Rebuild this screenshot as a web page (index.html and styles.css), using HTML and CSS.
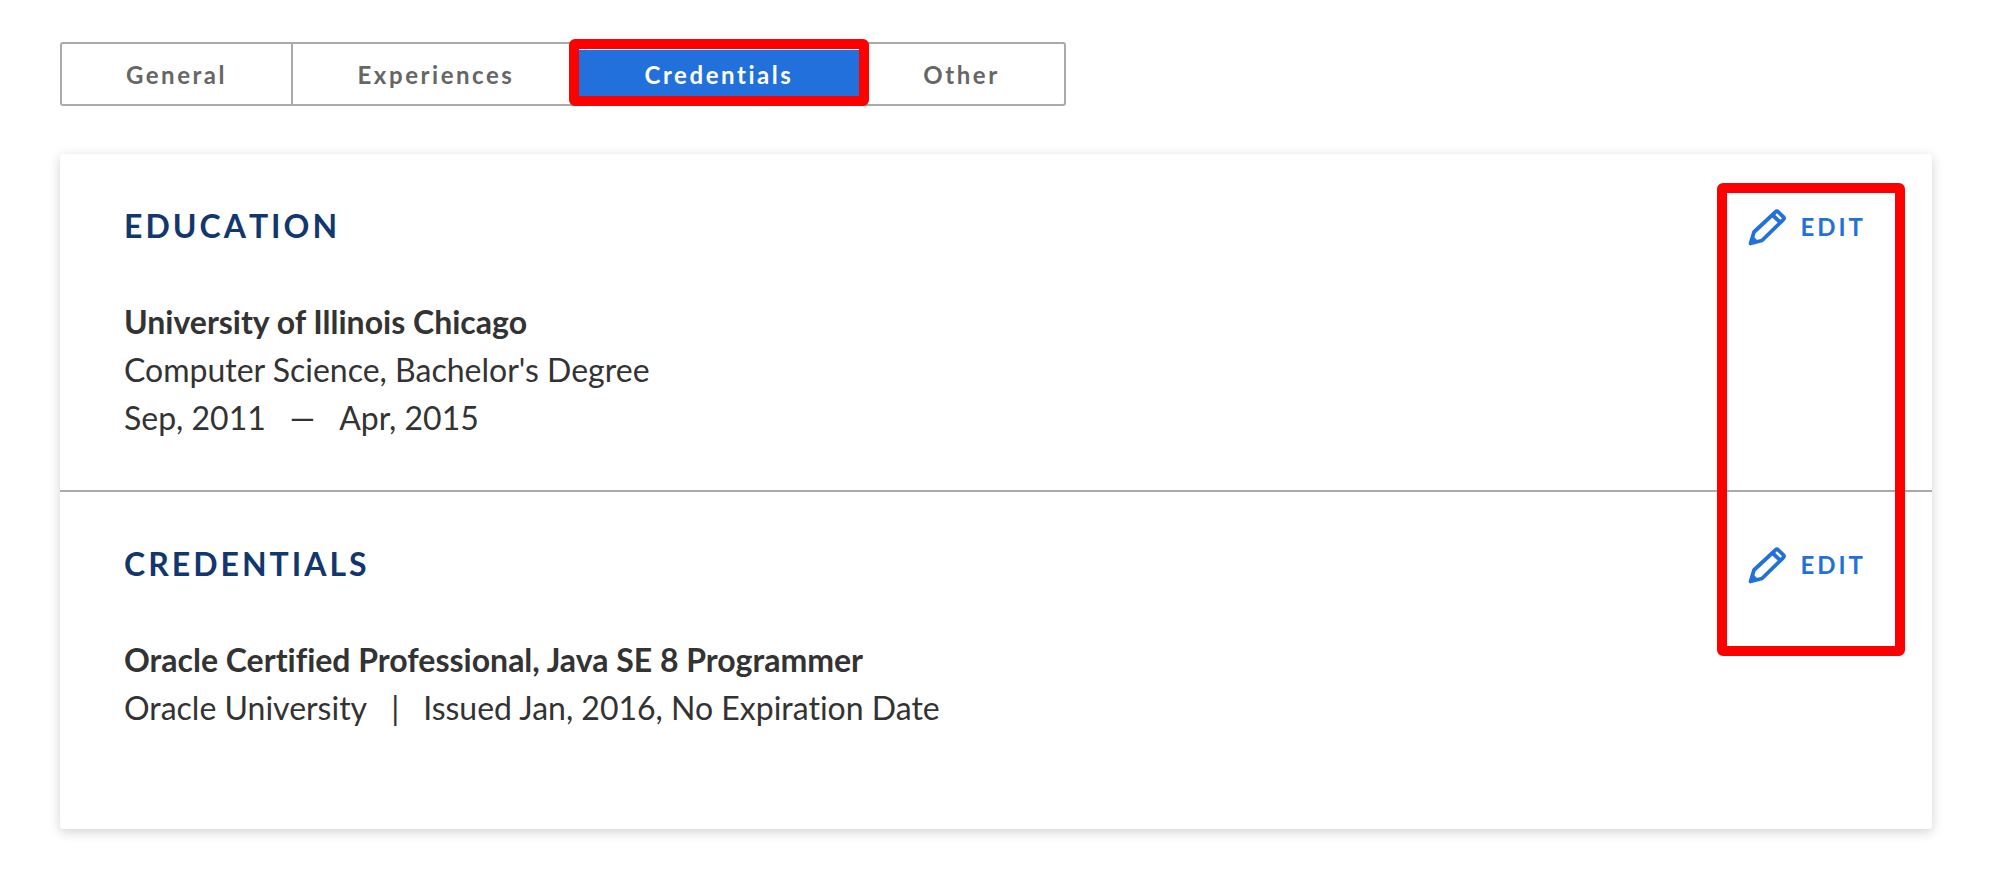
FILE: index.html
```html
<!DOCTYPE html>
<html lang="en">
<head>
<meta charset="utf-8">
<title>Credentials</title>
<link rel="stylesheet" href="styles.css">
</head>
<body>
<div class="page">
  <nav class="tabs">
    <div class="tab tab-general">General</div>
    <div class="tab tab-exp">Experiences</div>
    <div class="tab tab-cred active">Credentials</div>
    <div class="tab tab-other">Other</div>
  </nav>
  <main class="card">
    <section class="section section-edu">
      <div class="head">
        <h2>EDUCATION</h2>
        <a class="edit"><svg class="pencil" viewBox="0 0 38 37" fill="none" stroke="#2270db" stroke-width="3.8" stroke-linejoin="round"><path d="M6 23 27.500 3a2 2 0 0 1 2.800 0l5 4.800a2 2 0 0 1 0 2.800L14 31.500 2.500 34.500Z"/><path d="M24.500 6 32.500 13.500"/><path d="M5 27.500 9 31.500 3 33Z" fill="#2270db" stroke-width="1"/></svg><span>EDIT</span></a>
      </div>
      <div class="strong">University of Illinois Chicago</div>
      <div class="line">Computer Science, Bachelor's Degree</div>
      <div class="line">Sep, 2011<span class="sep">—</span>Apr, 2015</div>
    </section>
    <section class="section section-cred">
      <div class="head">
        <h2>CREDENTIALS</h2>
        <a class="edit"><svg class="pencil" viewBox="0 0 38 37" fill="none" stroke="#2270db" stroke-width="3.8" stroke-linejoin="round"><path d="M6 23 27.500 3a2 2 0 0 1 2.800 0l5 4.800a2 2 0 0 1 0 2.800L14 31.500 2.500 34.500Z"/><path d="M24.500 6 32.500 13.500"/><path d="M5 27.500 9 31.500 3 33Z" fill="#2270db" stroke-width="1"/></svg><span>EDIT</span></a>
      </div>
      <div class="strong">Oracle Certified Professional, Java SE 8 Programmer</div>
      <div class="line">Oracle University<span class="sep">|</span>Issued Jan, 2016, No Expiration Date</div>
    </section>
  </main>
  <div class="mark mark-tab"></div>
  <div class="mark mark-edit"></div>
</div>
</body>
</html>
```

FILE: styles.css
```css
* { box-sizing: border-box; }
html, body { margin: 0; background: #fff; }
body { font-family: Lato, "Open Sans", sans-serif; color: #333; font-variant-ligatures: none; }
.page { position: relative; width: 1991px; height: 885px; padding: 42px 59px 0 60px; overflow: hidden; }

.tabs { display: flex; width: 1006px; height: 64px; border: 2px solid #aaa; border-radius: 3px; }
.tab { display: flex; align-items: center; justify-content: center; font-size: 24px; font-weight: 700; letter-spacing: 2.55px; color: #666; }
.tab-general { width: 231px; border-right: 2px solid #aaa; }
.tab-exp { width: 286px; }
.tab-cred { width: 280px; }
.tab-other { flex: 1; }
.tab.active { background: #2270db; color: #fff; margin: 6px 0; }

.card { margin-top: 48px; height: 675px; background: #fff; border-radius: 4px; box-shadow: 0 3px 12px rgba(0,0,0,.18); }
.section { padding: 0 65px 0 64px; }
.section-edu { height: 338px; padding-top: 50px; border-bottom: 2px solid #aaa; }
.section-cred { padding-top: 50px; }
.head { display: flex; justify-content: space-between; align-items: center; height: 44px; margin-bottom: 50px; }
h2 { margin: 0; font-size: 32px; font-weight: 700; letter-spacing: 3px; font-kerning: none; color: #12376f; line-height: 44px; }
.edit { display: flex; align-items: center; gap: 14px; color: #2270db; font-size: 24px; font-weight: 700; letter-spacing: 3px; margin-right: 1px; padding-top: 1px; }
.pencil { width: 38px; height: 37px; display: block; margin-top: 2px; }
.strong { font-size: 32px; font-weight: 700; line-height: 48px; color: #333; }
.line { font-size: 32px; line-height: 48px; color: #333; }
.sep { margin: 0 24px; }

.mark { position: absolute; border: 10px solid #f00; border-radius: 6px; }
.mark-tab { left: 569px; top: 39px; width: 300px; height: 67px; }
.mark-edit { left: 1717px; top: 183px; width: 188px; height: 473px; }
```
